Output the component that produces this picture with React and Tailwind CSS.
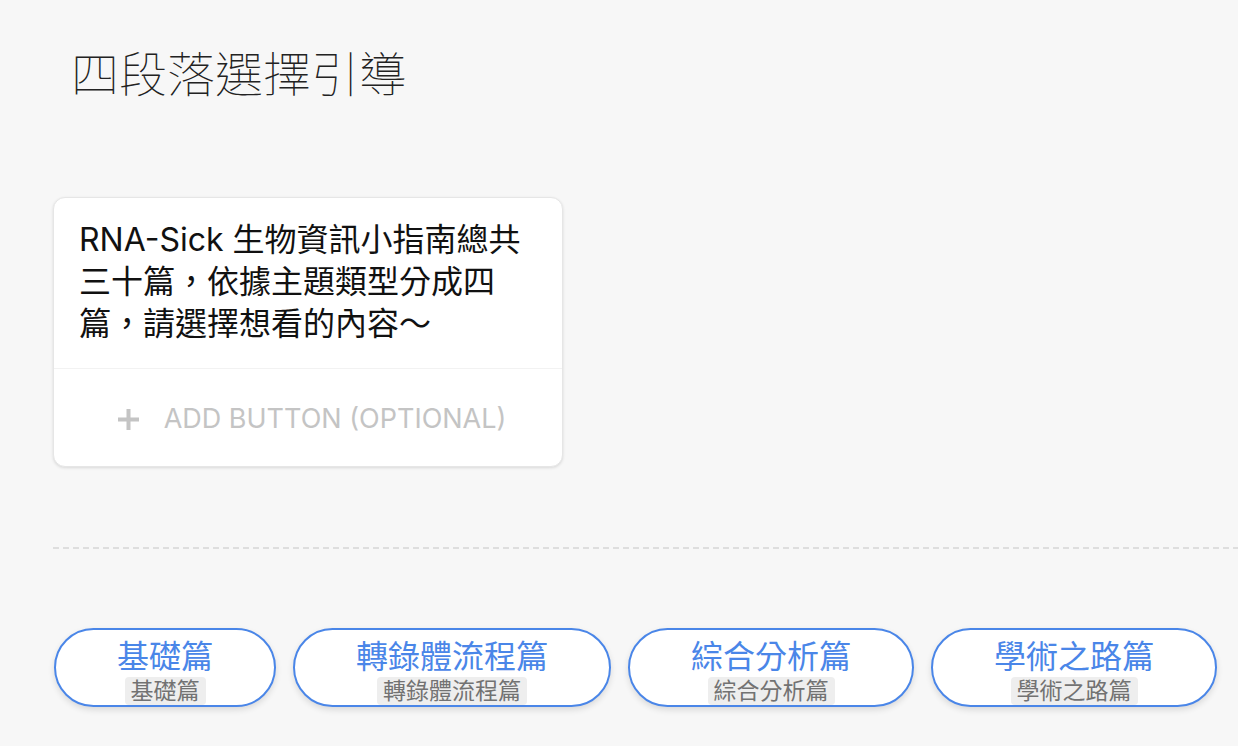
import React from 'react'

const sections = ['基礎篇', '轉錄體流程篇', '綜合分析篇', '學術之路篇']

export default function App() {
  return (
    <div
      className="min-h-[746px] w-full overflow-hidden bg-[#f7f7f7] pl-[53px]"
      style={{ fontFamily: 'Inter, "Noto Sans CJK TC", "Noto Sans", sans-serif' }}
    >
      <h1 className="ml-[18px] pt-[46px] text-[48px] font-thin leading-[58px] text-[#222]">
        四段落選擇引導
      </h1>

      <div className="mt-[93px] w-[510px] overflow-hidden rounded-[12px] border border-[#e6e6e6] bg-white shadow-[0_1px_3px_rgba(0,0,0,0.12)]">
        <p className="px-[25px] pt-[21px] pb-[23px] text-[32px] leading-[42px] text-[#111]">
          RNA-Sick 生物資訊小指南總共三十篇，依據主題類型分成四篇，請選擇想看的內容～
        </p>
        <div className="border-t border-[#f2f2f2]" />
        <div className="flex h-[97px] items-center justify-center gap-[25px] pt-[3px] pl-[8px]">
          <Plus />
          <span className="text-[27px] text-[#c4c4c4]">ADD BUTTON (OPTIONAL)</span>
        </div>
      </div>

      <div className="mt-[80px] h-[2px] w-full bg-[repeating-linear-gradient(to_right,#dedede_0_6px,transparent_6px_10px)]" />

      <div className="mt-[79px] flex gap-[17px] pl-px">
        {sections.map((s) => (
          <SectionButton key={s} label={s} />
        ))}
      </div>
    </div>
  )
}

function Plus() {
  return (
    <svg width="21" height="21" viewBox="0 0 21 21" className="shrink-0">
      <rect x="8.5" y="0" width="4" height="21" fill="#c4c4c4" />
      <rect x="0" y="8.5" width="21" height="4" fill="#c4c4c4" />
    </svg>
  )
}

function SectionButton({ label }) {
  return (
    <button className="flex h-[79px] flex-col items-center rounded-full border-2 border-[#4a86e8] bg-white px-[61px] pt-[8px] shadow-[0_3px_6px_rgba(0,0,0,0.12)]">
      <span className="whitespace-nowrap text-[32px] leading-[38px] text-[#4a86e8]">{label}</span>
      <span className="mt-px whitespace-nowrap rounded-[4px] bg-[#eeeeee] px-[6px] text-[23px] leading-[28px] text-[#727272]">
        {label}
      </span>
    </button>
  )
}
